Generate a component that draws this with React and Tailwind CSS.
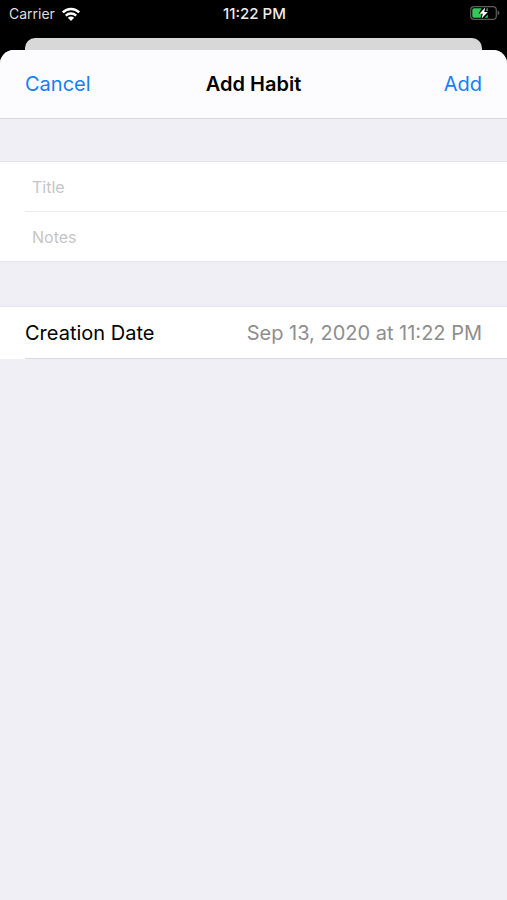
function WifiIcon() {
  return (
    <svg viewBox="0 0 20 15" className="h-[15px] w-5" fill="none" aria-hidden="true">
      <path d="M1.8 5.4C6.4 0.8 13.6 0.8 18.2 5.4" stroke="white" strokeWidth="2.6" />
      <path d="M4.8 8.6C7.7 5.8 12.3 5.8 15.2 8.6" stroke="white" strokeWidth="2.4" />
      <path d="M10 14L6.9 10.8C8.7 9.2 11.3 9.2 13.1 10.8Z" fill="white" />
    </svg>
  );
}

function BatteryIcon() {
  return (
    <svg viewBox="0 0 30 14" className="h-[14px] w-[30px]" fill="none" aria-hidden="true">
      <rect x="0.7" y="0.7" width="25.6" height="12.6" rx="3.4" stroke="#5c5c5c" strokeWidth="1.2" />
      <path d="M27.6 4.6C30 5.6 30 8.4 27.6 9.4Z" fill="#5c5c5c" />
      <path d="M4 2.3H11.6L8.6 7.8H11.6L10.6 11.7H4Q2.3 11.7 2.3 10V4Q2.3 2.3 4 2.3Z" fill="#35c759" />
      <path d="M16.8 2.3H17.8V5H16.2ZM17.8 8.4V11.7H14.6Z" fill="#35c759" />
      <path d="M15.2 1.4L9.4 7.8H12.8L11.6 12.6L17.8 6H14.2Z" fill="white" />
    </svg>
  );
}

function Field({ name }) {
  return (
    <div className="flex h-[49px] items-center px-8">
      <input
        type="text"
        aria-label={name}
        placeholder={name}
        className="h-full w-full bg-transparent text-base text-black outline-none placeholder:text-[#c5c5c7]"
      />
    </div>
  );
}

export default function App() {
  return (
    <div className="flex min-h-screen flex-col bg-black font-['Inter','Liberation_Sans',sans-serif]">
      <div className="grid h-[38px] grid-cols-3 items-start pr-[7px] pl-[9px] pt-1 text-white">
        <div className="flex items-center gap-[6px] pt-px text-sm leading-[18px]">
          <span className="text-[#dedede]">Carrier</span>
          <WifiIcon />
        </div>
        <span className="pt-px text-center text-[15px] leading-[18px] font-medium text-[#ededed]">11:22 PM</span>
        <div className="flex justify-end pt-[2px]">
          <BatteryIcon />
        </div>
      </div>
      <div className="mx-[25px] h-3 rounded-t-[10px] bg-[#d8d8d8]" />
      <main className="flex grow flex-col overflow-hidden rounded-t-[14px] bg-[#f0eff5]">
        <header className="grid h-[69px] grid-cols-[1fr_auto_1fr] items-center border-b border-[#d9d9dc] bg-[#fcfcfe] px-[25px] text-xl">
          <button type="button" className="justify-self-start text-[#157efb]">Cancel</button>
          <h1 className="font-semibold text-black">Add Habit</h1>
          <button type="button" className="justify-self-end text-[#157efb]">Add</button>
        </header>
        <section className="mt-[42px] border-y border-[#e5e5e9] bg-white">
          <Field name="Title" />
          <div className="ml-[25px] h-px bg-[#ebebed]" />
          <Field name="Notes" />
        </section>
        <section className="mt-11 border-t border-[#e5e5e9] bg-white">
          <button type="button" className="flex h-[51px] w-full items-center justify-between px-[25px] text-xl">
            <span className="text-black">Creation Date</span>
            <span className="text-[#8e8e90]">Sep 13, 2020 at 11:22 PM</span>
          </button>
          <div className="ml-[25px] h-px bg-[#dcdce0]" />
        </section>
      </main>
    </div>
  );
}
